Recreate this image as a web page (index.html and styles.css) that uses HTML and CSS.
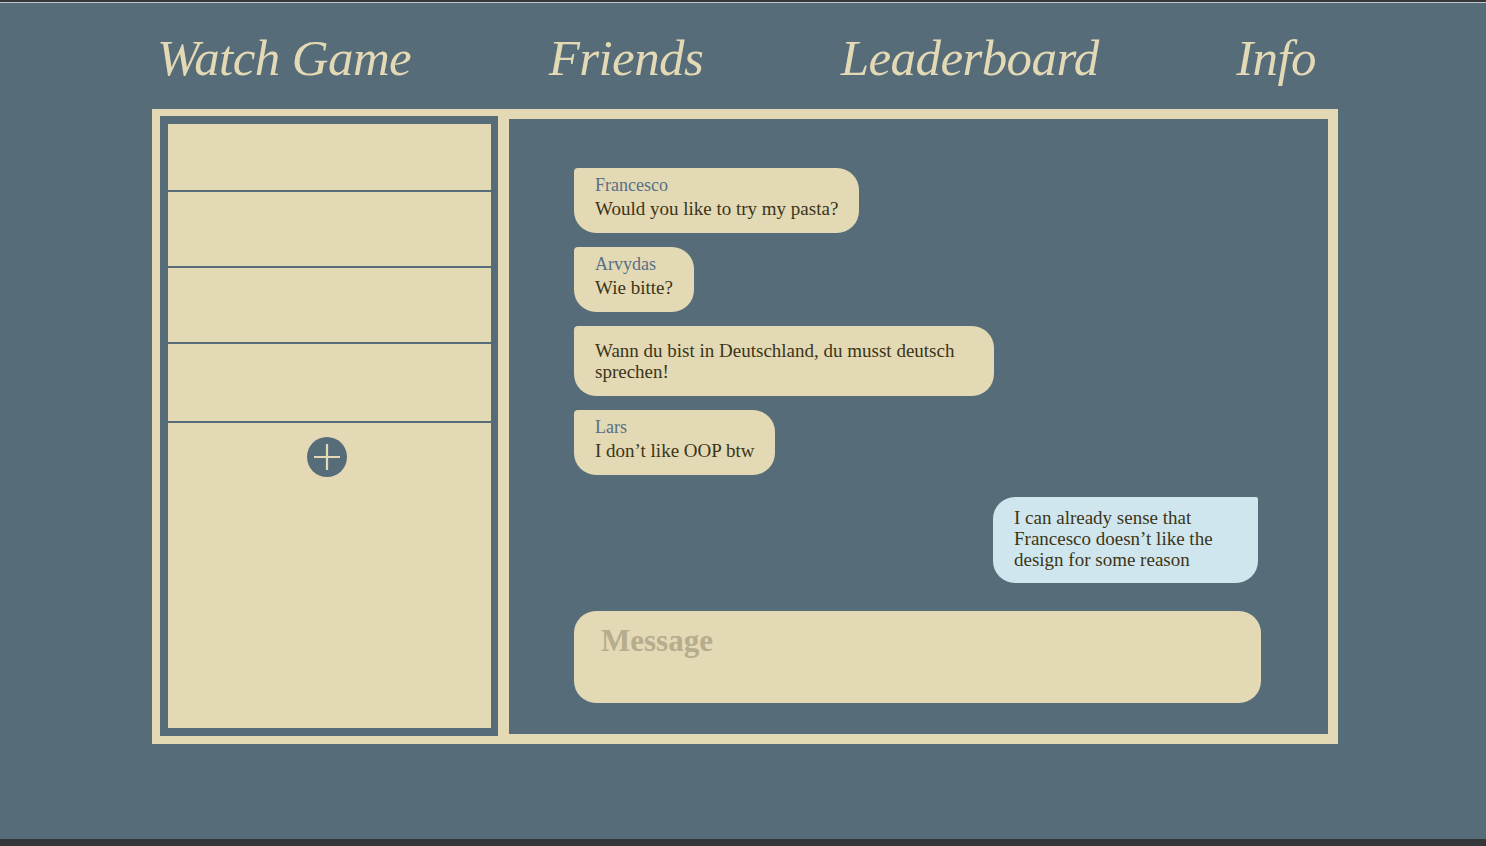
FILE: index.html
```html
<!DOCTYPE html>
<html lang="en">
<head>
  <meta charset="UTF-8" />
  <meta name="viewport" content="width=device-width, initial-scale=1.0"/>
  <title>Chat</title>
  <link rel="stylesheet" href="styles.css">
</head>
<body>
  <div class="page">
    <nav class="nav">
      <a class="nav-link" href="#">Watch Game</a>
      <a class="nav-link" href="#">Friends</a>
      <a class="nav-link" href="#">Leaderboard</a>
      <a class="nav-link" href="#">Info</a>
    </nav>

    <div class="frame">
      <div class="friends">
        <div class="friend-list">
          <div class="friend"></div>
          <div class="friend"></div>
          <div class="friend"></div>
          <div class="friend"></div>
          <button class="add-btn" aria-label="Add friend">
            <svg width="40" height="40" viewBox="0 0 40 40">
              <circle cx="20" cy="20" r="20" fill="#576c79"/>
              <path d="M7 20 H33 M20 7 V33" stroke="#e3d9b5" stroke-width="2.2"/>
            </svg>
          </button>
        </div>
      </div>

      <div class="chat">
        <div class="messages">
          <div class="bubble">
            <div class="sender">Francesco</div>
            <div class="text">Would you like to try my pasta?</div>
          </div>
          <div class="bubble">
            <div class="sender">Arvydas</div>
            <div class="text">Wie bitte?</div>
          </div>
          <div class="bubble">
            <div class="text">Wann du bist in Deutschland, du musst deutsch sprechen!</div>
          </div>
          <div class="bubble">
            <div class="sender">Lars</div>
            <div class="text">I don’t like OOP btw</div>
          </div>
          <div class="bubble bubble-own">
            <div class="text">I can already sense that Francesco doesn’t like the design for some reason</div>
          </div>
        </div>
        <textarea class="message-input" placeholder="Message"></textarea>
      </div>
    </div>
  </div>
</body>
</html>
```

FILE: styles.css
```css
body {
  margin: 0;
  background: #33373a;
  font-family: 'Liberation Serif', 'Times New Roman', serif;
}

.page {
  margin-top: 2px;
  border-top: 1px solid #c4c6c6;
  height: 837px;
  background: #576c79;
  padding-top: 29px;
  box-sizing: border-box;
}

.nav {
  display: flex;
  justify-content: space-between;
  width: 1186px;
  margin-left: 152px;
  padding: 0 22px 0 5px;
  box-sizing: border-box;
  height: 52px;
}

.nav-link {
  font-style: italic;
  font-size: 51px;
  line-height: 52px;
  letter-spacing: -0.6px;
  color: #e3d9b5;
  text-decoration: none;
}

.frame {
  display: flex;
  align-items: stretch;
  width: 1186px;
  height: 635px;
  margin: 25px 0 0 152px;
  background: #e3d9b5;
}

.friends {
  width: 338px;
  margin: 7px 0 8px 8px;
  border: 8px solid #576c79;
  border-right-width: 7px;
  box-sizing: border-box;
  background: #e3d9b5;
}

.friend {
  height: 74px;
  border-bottom: 2px solid #576c79;
}

.friend:first-child {
  height: 66px;
}

.friend:nth-child(4) {
  height: 77px;
}

.add-btn {
  display: block;
  margin: 14px auto 0;
  padding: 0;
  border: none;
  background: none;
  width: 40px;
  height: 40px;
  cursor: pointer;
  position: relative;
  left: -3px;
}

.add-btn svg {
  display: block;
}

.chat {
  flex: 1;
  display: flex;
  flex-direction: column;
  margin: 10px 10px 10px 11px;
  padding: 49px 67px 31px 65px;
  background: #576c79;
}

.messages {
  display: flex;
  flex-direction: column;
  align-items: flex-start;
  gap: 14px;
}

.bubble {
  max-width: 420px;
  box-sizing: border-box;
  padding: 14px 21px 14px;
  background: #e3d9b5;
  border-radius: 4px 22px 22px 22px;
}

.sender {
  margin: -6px 0 4px;
  font-size: 18px;
  line-height: 18px;
  color: #587085;
}

.text {
  font-size: 19px;
  line-height: 21px;
  color: #3b3517;
}

.bubble-own {
  align-self: flex-end;
  width: 265px;
  margin: 8px 3px 0 0;
  padding: 10px 21px 13px;
  background: #d0e6ee;
  border-radius: 22px 2px 22px 22px;
}

.message-input {
  margin-top: auto;
  height: 92px;
  box-sizing: border-box;
  padding: 12px 27px;
  border: none;
  outline: none;
  resize: none;
  border-radius: 22px;
  background: #e3d9b5;
  font-family: 'Liberation Serif', 'Times New Roman', serif;
  font-size: 31px;
  font-weight: bold;
  line-height: 36px;
  color: #3b3517;
}

.message-input::placeholder {
  color: #b7ac8d;
}
```
